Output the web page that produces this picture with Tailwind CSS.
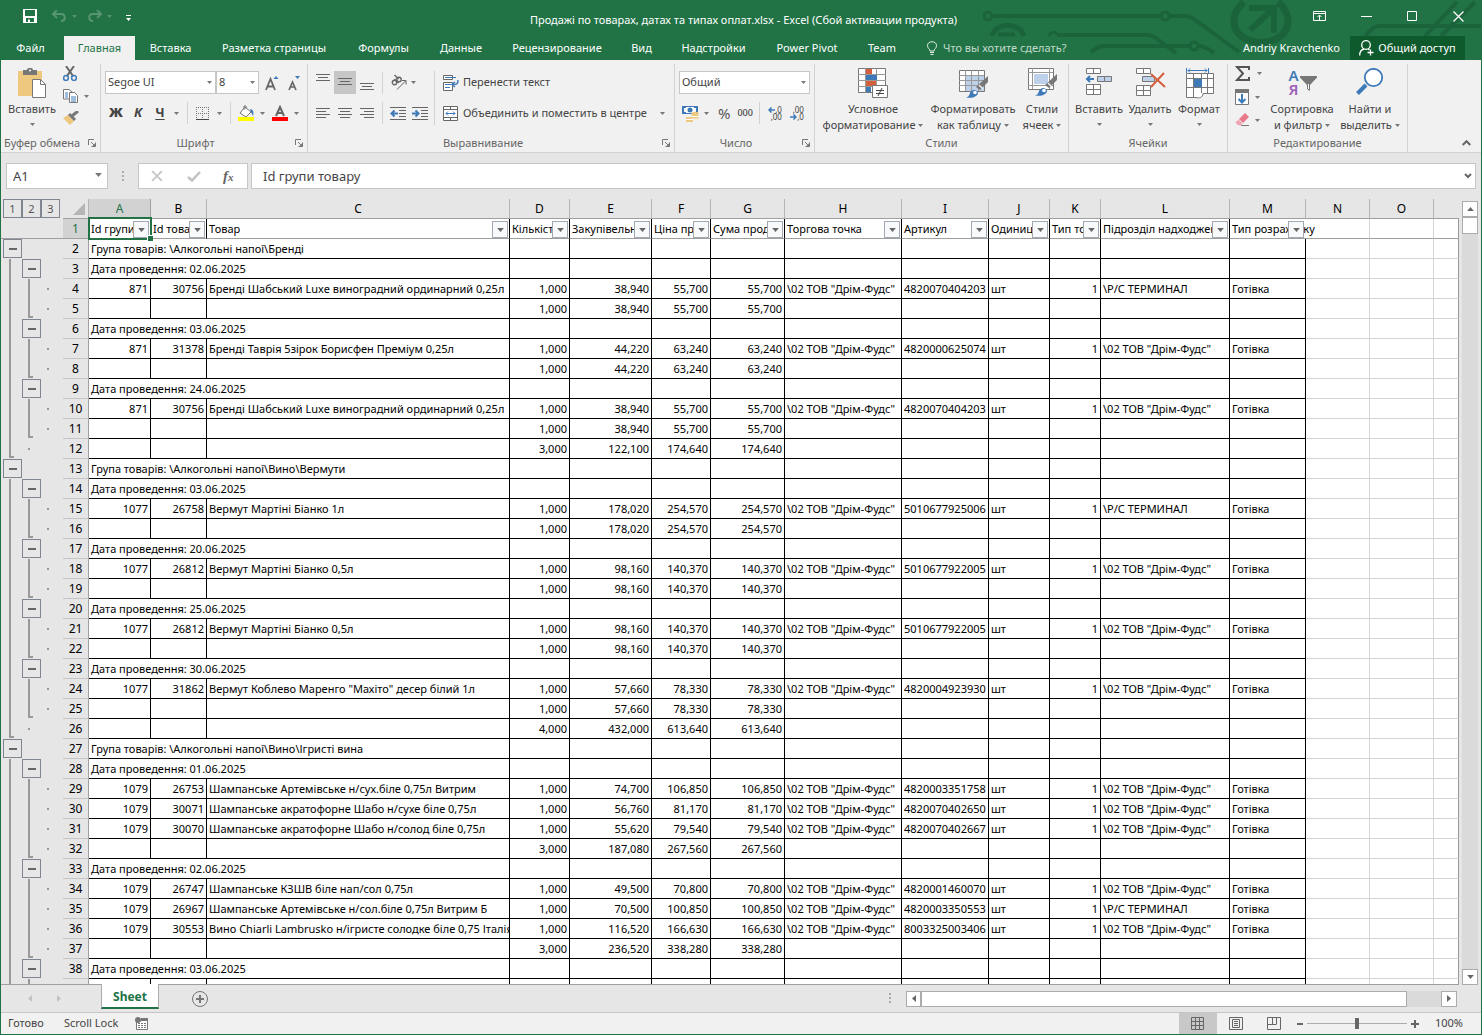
<!DOCTYPE html>
<html lang="ru">
<head>
  <meta charset="UTF-8">
  <meta name="viewport" content="width=device-width, initial-scale=1">
  <title>Продажі по товарах, датах та типах оплат.xlsx - Excel</title>
  <script src="https://cdn.jsdelivr.net/npm/@tailwindcss/browser@4"></script>
</head>
<body class="h-screen flex flex-col overflow-hidden border-x border-b border-[#217346] bg-[#e6e6e6] font-['Noto_Sans','Open_Sans',sans-serif] text-[11px] text-[#444444]">

  <svg class="hidden">
    <symbol id="arrow" viewBox="0 0 5 3"><path d="M0 0h5L2.5 3z" fill="currentColor"/></symbol>
    <symbol id="launcher" viewBox="0 0 8 8"><path d="M.5 6V.5H6M3 3l3.500 3.500M7.500 3.500v4h-4" fill="none" stroke="#777"/><path d="M7.500 4v3.500H4z" fill="#777"/></symbol>
    <symbol id="brush" viewBox="0 0 24 22"><path d="M23 0v6l-8 8-4-3z" fill="#777"/><path d="M14 9l4 4" stroke="#f1f1f1" stroke-width="1.500"/><path d="M1 21.500c4-1 3-4 5-6 2-2.500 6-2 7 1 0 4-5 6-12 5z" fill="#3f7ab8"/><circle cx="10" cy="16.500" r="1.800" fill="#fff"/></symbol>
  </svg>

  <!-- Title bar and tabs -->
  <header class="relative shrink-0 bg-[#217346] text-white">
    <svg class="absolute right-0 top-0" width="522" height="60" viewBox="0 0 522 60" fill="none" stroke="#1b633b" stroke-width="4">
      <circle cx="29" cy="16" r="4" stroke-width="3"/>
      <path d="M33 16h169M210 16h16c6 0 9 3 13 6l41 30"/>
      <circle cx="206" cy="16" r="4" stroke-width="3"/>
      <path d="M33 36c3-14 28-14 32 0" stroke-width="5"/>
      <path d="M39 34.500h17" stroke-width="4"/>
      <path d="M91 36c-1-5 7-5 7-1" stroke-width="3"/>
      <path d="M98 35h90c5 0 7 2 10 4l19 14"/>
      <path d="M132 52c7-5 9-6 14-6h86M240 46c6 0 9 3 15 7"/>
      <circle cx="235" cy="46" r="4" stroke-width="3"/>
      <path d="M285 2c-14 12-14 30 4 38 8 3 18 3 26 0 18-8 18-26 4-38" stroke-width="7"/>
      <path d="M290 8h25v25M313 10l-22 20" stroke-width="6"/>
      <path d="M406 36l8-8c2-1 3-2 6-2h102M466 36l32-34M482 36l34-34"/>
    </svg>
    <div class="relative flex h-9 items-center">
      <div class="flex flex-1 items-center pl-[22px] pb-1">
        <button aria-label="Сохранить" class="w-[29px]"><svg width="14" height="14" viewBox="0 0 14 14"><path d="M0 0h14v14H0z" fill="#fff"/><path d="M2 1h10v6H2zM3 9h8v4H3z" fill="#217346"/><path d="M5 10.500h2V13H5z" fill="#fff"/></svg></button>
        <button aria-label="Отменить" class="w-[20px] text-[#579472]"><svg width="15" height="12" viewBox="0 0 15 12" fill="none" stroke="currentColor" stroke-width="2"><path d="M5 0L1 4l4 4M1 4h8c5 0 5 7 0 7"/></svg></button>
        <svg class="mr-[10px] text-[#579472]" width="5" height="3"><use href="#arrow"/></svg>
        <button aria-label="Повторить" class="w-[20px] text-[#579472]"><svg width="15" height="12" viewBox="0 0 15 12" fill="none" stroke="currentColor" stroke-width="2"><path d="M10 0l4 4-4 4M14 4H6c-5 0-5 7 0 7"/></svg></button>
        <svg class="mr-3.5 text-[#579472]" width="5" height="3"><use href="#arrow"/></svg>
        <button aria-label="Настройка панели"><svg class="mt-1" width="5" height="6" viewBox="0 0 5 6"><path d="M0 0h5v1H0zM0 3h5L2.500 6z" fill="#fff"/></svg></button>
      </div>
      <h1 class="pt-1">Продажі по товарах, датах та типах оплат.xlsx - Excel (Сбой активации продукта)</h1>
      <div class="flex flex-1 items-center justify-end gap-[35px] pb-1 pr-[17px]">
        <button aria-label="Параметры ленты"><svg width="13" height="10" viewBox="0 0 13 10" fill="none" stroke="#fff"><path d="M.5.500h12v9H.500zM.5 2.500h12M6.500 9V4.500M4.500 6l2-2 2 2"/></svg></button>
        <button aria-label="Свернуть"><svg width="11" height="10" viewBox="0 0 11 10" stroke="#fff"><path d="M0 5.500h11"/></svg></button>
        <button aria-label="Развернуть"><svg width="11" height="10" viewBox="0 0 11 10" fill="none" stroke="#fff"><path d="M.5.500h9v9H.500z"/></svg></button>
        <button aria-label="Закрыть"><svg width="11" height="11" viewBox="0 0 11 11" stroke="#fff" stroke-width="1.300"><path d="M.5.500l10 10M10.500.500l-10 10"/></svg></button>
      </div>
    </div>
    <nav class="relative flex h-6 items-center whitespace-nowrap">
      <button class="h-6 w-[63px] pr-1">Файл</button>
      <button class="h-6 w-[71px] bg-[#f1f1f1] text-[#217346]">Главная</button>
      <button class="h-6 w-[71px]">Вставка</button>
      <button class="h-6 w-[136px]">Разметка страницы</button>
      <button class="h-6 w-[83px]">Формулы</button>
      <button class="h-6 w-[72px]">Данные</button>
      <button class="h-6 w-[120px]">Рецензирование</button>
      <button class="h-6 w-[49px]">Вид</button>
      <button class="h-6 w-[95px]">Надстройки</button>
      <button class="h-6 w-[92px]">Power Pivot</button>
      <button class="h-6 w-[58px]">Team</button>
      <button class="flex h-6 items-center gap-1.5 pl-4 text-[#c3dacd]">
        <svg width="10" height="14" viewBox="0 0 10 14" fill="none" stroke="#e4efe8"><path d="M3 10C3 8 .5 7.500.5 4.500c0-5 9-5 9 0C9.500 7.500 7 8 7 10zM3 11.500h4M3.500 13.500h3"/></svg>
        Что вы хотите сделать?
      </button>
      <span class="ml-auto mr-2.5">Andriy Kravchenko</span>
      <button class="mr-4 flex h-6 w-[115px] items-center justify-center gap-1 bg-[#0f5a2d]">
        <svg width="15" height="16" viewBox="0 0 15 16" fill="none" stroke="#fff" stroke-width="1.300"><circle cx="7" cy="5" r="4.300"/><path d="M.7 15.500c0-4 2-6 4.500-6.500M9 9l1.500 1M11.500 9.500v6M8.500 12.500h6"/></svg>
        Общий доступ
      </button>
    </nav>
  </header>

  <!-- Ribbon -->
  <section class="flex h-[93px] shrink-0 border-b border-[#d2d2d2] bg-[#f1f1f1] pt-1 whitespace-nowrap">
    <div class="flex w-[100px] flex-col border-r border-[#d2d2d2]">
      <div class="flex flex-1 pl-1">
        <button class="flex w-[54px] flex-col items-center pt-1">
          <svg class="shrink-0" width="28" height="30" viewBox="0 0 28 30"><path d="M0 3h24v25H0z" fill="#edc87e"/><path d="M5 2h4c0-3 6-3 6 0h4v5H5z" fill="#777"/><circle cx="12" cy="2.500" r="1" fill="#fff"/><path d="M14.500 11.500h8l5 5v13h-13z" fill="#fff" stroke="#777"/><path d="M22.500 11.500v5h5" fill="none" stroke="#777"/></svg>
          <span class="mt-[3px] leading-4">Вставить</span>
          <svg class="mt-1.5 text-[#777777]" width="5" height="3"><use href="#arrow"/></svg>
        </button>
        <div class="flex flex-col items-start gap-2 pl-1 pt-0.5">
          <button aria-label="Вырезать"><svg width="14" height="15" viewBox="0 0 14 15" fill="none" stroke-width="1.500"><path d="M3 0l7 10M11 0L4 10" stroke="#666" stroke-width="2"/><circle cx="3" cy="12" r="2.400" stroke="#3f7ab8"/><circle cx="11" cy="12" r="2.400" stroke="#3f7ab8"/></svg></button>
          <button aria-label="Копировать" class="flex items-center gap-[5px]"><svg width="16" height="14" viewBox="0 0 16 14" stroke="#777" fill="#fff"><path d="M.5.500H6L9 3v7H.500z"/><path d="M6.500 3.500h5l3 3v7h-8z"/><path d="M2 4h3M2 6h3M2 8h3M8 8h5M8 10h5M8 12h5" stroke="#3f7ab8"/></svg><svg class="text-[#777777]" width="5" height="3"><use href="#arrow"/></svg></button>
          <button aria-label="Формат по образцу"><svg width="16" height="14" viewBox="0 0 16 14"><path d="M0 7l5-3 6 6-4 4z" fill="#edc87e"/><path d="M5 4l2-2 6 6-2 2z" fill="#777"/><path d="M9 5l6-5" stroke="#777" stroke-width="3"/></svg></button>
        </div>
      </div>
      <div class="flex h-[18px] items-center justify-between pl-[3px] pr-1 text-[#666666]"><span>Буфер обмена</span><button aria-label="Параметры буфера"><svg width="8" height="8"><use href="#launcher"/></svg></button></div>
    </div>

    <div class="flex w-[207px] flex-col border-r border-[#d2d2d2]">
      <div class="flex flex-1 flex-col gap-2 pl-1 pt-[7px]">
        <div class="flex h-[23px] items-center">
          <div class="relative">
            <select aria-label="Шрифт" class="block h-[23px] w-[111px] appearance-none border border-[#c6c6c6] bg-white px-0.5"><option>Segoe UI</option></select>
            <svg class="pointer-events-none absolute right-1 top-2.5 text-[#777777]" width="5" height="3"><use href="#arrow"/></svg>
          </div>
          <div class="relative">
            <select aria-label="Размер шрифта" class="block h-[23px] w-[43px] appearance-none border border-[#c6c6c6] bg-white px-0.5"><option>8</option></select>
            <svg class="pointer-events-none absolute right-1 top-2.5 text-[#777777]" width="5" height="3"><use href="#arrow"/></svg>
          </div>
          <button aria-label="Увеличить размер" class="ml-1.5"><svg width="14" height="16" viewBox="0 0 14 16" fill="none"><path d="M1 15L5.500 4 10 15M3 11.500h5" stroke="#666" stroke-width="1.800"/><path d="M8.500 4h5L11 1z" fill="#3f7ab8"/></svg></button>
          <button aria-label="Уменьшить размер" class="ml-[9px]"><svg width="12" height="16" viewBox="0 0 12 16" fill="none"><path d="M1 15l3.500-8L8 15M2.500 12h4" stroke="#666" stroke-width="1.700"/><path d="M7 1h5L9.500 4z" fill="#3f7ab8"/></svg></button>
        </div>
        <div class="flex h-[22px] items-center">
          <button class="w-[22px] text-[13px] font-black">Ж</button>
          <button class="w-[22px] text-[13px] font-bold italic">К</button>
          <button class="w-[22px] text-[13px] font-bold underline underline-offset-2">Ч</button>
          <svg class="ml-[3px] text-[#777777]" width="5" height="3"><use href="#arrow"/></svg>
          <span class="ml-2 h-[22px] w-px bg-[#d2d2d2]"></span>
          <button aria-label="Границы" class="ml-2"><svg width="13" height="13" viewBox="0 0 13 13" fill="none" stroke="#777"><path d="M0 .5h13M0 6.500h13M.5 0v12M6.500 0v12M12.500 0v12" stroke-dasharray="1 1"/><path d="M0 12.500h13" stroke="#444"/></svg></button>
          <svg class="ml-2 text-[#777777]" width="5" height="3"><use href="#arrow"/></svg>
          <span class="ml-2 h-[22px] w-px bg-[#d2d2d2]"></span>
          <button aria-label="Цвет заливки" class="ml-[7px]"><svg width="16" height="16" viewBox="0 0 16 16"><path d="M7 2l6 5-5 5-6-4z" fill="#fff" stroke="#777"/><path d="M6 5V1h2v3" fill="none" stroke="#777"/><path d="M12 4c3 0 4 3 3 7l-2-4z" fill="#3f7ab8"/><path d="M0 12h16v4H0z" fill="#ff0"/></svg></button>
          <svg class="ml-1.5 text-[#777777]" width="5" height="3"><use href="#arrow"/></svg>
          <button aria-label="Цвет текста" class="ml-[7px]"><svg width="16" height="16" viewBox="0 0 16 16"><path d="M4 11L8 2l4 9M5.500 8h5" fill="none" stroke="#666" stroke-width="2"/><path d="M0 12h16v4H0z" fill="#f00"/></svg></button>
          <svg class="ml-1.5 text-[#777777]" width="5" height="3"><use href="#arrow"/></svg>
        </div>
      </div>
      <div class="flex h-[18px] items-center pr-1 text-[#666666]"><span class="w-[189px] text-center">Шрифт</span><button aria-label="Параметры шрифта" class="ml-auto"><svg width="8" height="8"><use href="#launcher"/></svg></button></div>
    </div>

    <div class="flex w-[367px] flex-col border-r border-[#d2d2d2]">
      <div class="flex flex-1 pt-[7px]">
        <div class="flex flex-col gap-2 pl-1">
          <div class="flex h-[23px] items-center">
            <button aria-label="По верхнему краю" class="flex h-[23px] w-[22px] justify-center pt-[3px]"><svg width="14" height="14" viewBox="0 0 14 14" stroke="#666"><path d="M0 .5h14M2 3.500h10M0 6.500h14"/></svg></button>
            <button aria-label="По середине" class="flex h-[23px] w-[22px] justify-center bg-[#c6c6c6] pt-[7px]"><svg width="14" height="14" viewBox="0 0 14 14" stroke="#666"><path d="M0 .5h14M2 3.500h10M0 6.500h14"/></svg></button>
            <button aria-label="По нижнему краю" class="flex h-[23px] w-[22px] justify-center pt-3"><svg class="shrink-0" width="14" height="8" viewBox="0 0 14 8" stroke="#666"><path d="M0 .5h14M2 3.500h10M0 6.500h14"/></svg></button>
            <span class="ml-1 h-[22px] w-px bg-[#d2d2d2]"></span>
            <button aria-label="Ориентация" class="ml-2"><svg class="overflow-visible" width="16" height="15" viewBox="0 0 16 15" fill="none" stroke="#666" stroke-width="1.400"><circle cx="3.500" cy="7.500" r="2.200"/><path d="M3.500 4l4 4"/><circle cx="8" cy="4.500" r="2.200"/><path d="M3.500 0l4 4"/><path d="M6 14.500l8.500-8.500M11 5.500h4v4" stroke-width="1"/></svg></button>
            <svg class="ml-1 text-[#777777]" width="5" height="3"><use href="#arrow"/></svg>
          </div>
          <div class="flex h-[22px] items-center">
            <button aria-label="По левому краю" class="flex w-[22px] justify-center"><svg width="14" height="10" viewBox="0 0 14 10" stroke="#666"><path d="M0 .5h14M0 3.500h10M0 6.500h14M0 9.500h10"/></svg></button>
            <button aria-label="По центру" class="flex w-[22px] justify-center"><svg width="14" height="10" viewBox="0 0 14 10" stroke="#666"><path d="M0 .5h14M2 3.500h10M0 6.500h14M2 9.500h10"/></svg></button>
            <button aria-label="По правому краю" class="flex w-[22px] justify-center"><svg width="14" height="10" viewBox="0 0 14 10" stroke="#666"><path d="M0 .5h14M4 3.500h10M0 6.500h14M4 9.500h10"/></svg></button>
            <span class="ml-1 h-[22px] w-px bg-[#d2d2d2]"></span>
            <button aria-label="Уменьшить отступ" class="ml-[7px]"><svg width="16" height="13" viewBox="0 0 16 13" stroke="#666" fill="none"><path d="M0 .5h16M9 3.500h7M9 6.500h7M9 9.500h7M0 12.500h16"/><path d="M8 6.500H2M4.500 3.500l-3 3 3 3" stroke="#3f7ab8" stroke-width="2"/></svg></button>
            <button aria-label="Увеличить отступ" class="ml-1.5"><svg width="16" height="13" viewBox="0 0 16 13" stroke="#666" fill="none"><path d="M0 .5h16M9 3.500h7M9 6.500h7M9 9.500h7M0 12.500h16"/><path d="M0 6.500h6M3.500 3.500l3 3-3 3" stroke="#3f7ab8" stroke-width="2"/></svg></button>
          </div>
        </div>
        <span class="ml-1.5 h-[54px] w-px bg-[#d2d2d2]"></span>
        <div class="flex flex-1 flex-col gap-2 pl-2 pr-[9px]">
          <button class="flex h-[23px] items-center gap-1"><svg width="16" height="16" viewBox="0 0 16 16" fill="none" stroke="#666"><path d="M.5.500h9v4h-9zM.5 7.500h9v8h-9z" fill="#fff"/><path d="M2 2.500h11M2 9.500h6M2 12.500h5" stroke="#3f7ab8"/><path d="M15 5c0 4-1 4.500-5 4.500M12 7l-3 2.500 3 2.500" stroke="#3f7ab8" stroke-width="1.500"/></svg>Перенести текст</button>
          <button class="flex h-[22px] items-center gap-1"><svg width="16" height="15" viewBox="0 0 16 15" fill="#fff" stroke="#666"><path d="M.5.500h14v14H.500zM.5 3.500h14M.5 11.500h14M7.500 0v3M7.500 12v3"/><path d="M3 7.500h9M5 5.500l-2 2 2 2M10 5.500l2 2-2 2" fill="none" stroke="#3f7ab8"/></svg>Объединить и поместить в центре<svg class="ml-auto text-[#777777]" width="5" height="3"><use href="#arrow"/></svg></button>
        </div>
      </div>
      <div class="flex h-[18px] items-center pr-1 text-[#666666]"><span class="w-[350px] text-center">Выравнивание</span><button aria-label="Параметры выравнивания" class="ml-auto"><svg width="8" height="8"><use href="#launcher"/></svg></button></div>
    </div>

    <div class="flex w-[140px] flex-col border-r border-[#d2d2d2]">
      <div class="flex flex-1 flex-col gap-2 px-1 pt-[7px]">
        <div class="relative">
          <select aria-label="Числовой формат" class="block h-[23px] w-full appearance-none border border-[#c6c6c6] bg-white px-0.5"><option>Общий</option></select>
          <svg class="pointer-events-none absolute right-1 top-2.5 text-[#777777]" width="5" height="3"><use href="#arrow"/></svg>
        </div>
        <div class="flex h-[22px] items-center pl-[3px]">
          <button aria-label="Финансовый формат"><svg width="17" height="17" viewBox="0 0 17 17"><path d="M0 1h16v8H0z" fill="#3f7ab8"/><path d="M2 2h12v6H2z" fill="#fff"/><path d="M1 1h3v2H1zM12 1h3v2h-3zM1 7h3v2H1z" fill="#3f7ab8"/><circle cx="8" cy="5" r="2.500" fill="#3f7ab8"/><ellipse cx="13" cy="8.500" rx="3.500" ry="1.800" fill="#edc87e"/><path d="M9.500 9.500h7v5h-7zM4 12h7v5H4z" fill="#edc87e"/><path d="M9.500 11.500h7M9.500 14h7M4 14.500h7" stroke="#fff"/></svg></button>
          <svg class="ml-[5px] text-[#777777]" width="5" height="3"><use href="#arrow"/></svg>
          <button class="ml-[9px] text-[15px] text-[#555555]">%</button>
          <button class="ml-[7px] text-[9px] font-medium">000</button>
          <span class="ml-1.5 h-[22px] w-px bg-[#d2d2d2]"></span>
          <button aria-label="Увеличить разрядность" class="ml-[7px] flex w-[15px] flex-col items-end text-[8px] leading-[7px]"><span class="flex items-center"><svg width="7" height="6" viewBox="0 0 7 6" fill="none" stroke="#3f7ab8" stroke-width="1.500"><path d="M7 3H1M3.500.500L1 3l2.500 2.500"/></svg>,0</span><span>,00</span></button>
          <button aria-label="Уменьшить разрядность" class="ml-[7px] flex w-[15px] flex-col items-end text-[8px] leading-[7px]"><span>,00</span><span class="flex items-center"><svg width="7" height="6" viewBox="0 0 7 6" fill="none" stroke="#3f7ab8" stroke-width="1.500"><path d="M0 3h6M3.500.500L6 3 3.500 5.500"/></svg>,0</span></button>
        </div>
      </div>
      <div class="flex h-[18px] items-center pr-1 text-[#666666]"><span class="w-[122px] text-center">Число</span><button aria-label="Параметры числа" class="ml-auto"><svg width="8" height="8"><use href="#launcher"/></svg></button></div>
    </div>

    <div class="flex w-[254px] flex-col border-r border-[#d2d2d2]">
      <div class="flex flex-1 pl-1">
        <button class="flex w-[108px] flex-col items-center pt-1 leading-4">
          <svg class="mb-0.5" width="31" height="31" viewBox="0 0 31 31"><path d="M.5.500h27v24H.500z" fill="#fff" stroke="#777"/><path d="M0 6.500h28M0 12.500h28M0 18.500h28M7.500 0v25M18.500 0v25" stroke="#999"/><path d="M8 1h6v5H8zM8 13h10v5H8z" fill="#d65f3e"/><path d="M8 7h11v5H8zM8 19h5v5H8z" fill="#3f7ab8"/><path d="M14.500 17.500h15v12h-15z" fill="#fff" stroke="#777"/><path d="M18 22.500h8M18 25.500h8M24 20l-4 8" stroke="#444"/></svg>
          <span>Условное</span>
          <span class="flex items-center gap-[3px]">форматирование<svg class="text-[#777777]" width="5" height="3"><use href="#arrow"/></svg></span>
        </button>
        <button class="flex w-[92px] flex-col items-center pt-1 leading-4">
          <svg class="mb-0.5" width="31" height="31" viewBox="0 0 31 31"><path d="M1.500 2.500h25v21h-25z" fill="#fff" stroke="#777"/><path d="M8 8h18v15H8z" fill="#bdd2ea"/><path d="M1 7.500h25M1 12.500h25M1 17.500h25M7.500 2v21M13.500 2v21M20.500 2v21" stroke="#999"/><use href="#brush" x="7" y="8" width="24" height="22"/></svg>
          <span>Форматировать</span>
          <span class="flex items-center gap-[3px]">как таблицу<svg class="text-[#777777]" width="5" height="3"><use href="#arrow"/></svg></span>
        </button>
        <button class="flex w-[46px] flex-col items-center pt-1 leading-4">
          <svg class="mb-0.5" width="31" height="31" viewBox="0 0 31 31"><path d="M1.500.500h25v21h-25z" fill="#fff" stroke="#777"/><path d="M1 4.500h25M1 17.500h25M5.500 0v21M22.500 0v21" stroke="#999"/><path d="M7 6h14v10H7z" fill="#bdd2ea"/><use href="#brush" x="7" y="6" width="24" height="22"/></svg>
          <span>Стили</span>
          <span class="flex items-center gap-[3px]">ячеек<svg class="text-[#777777]" width="5" height="3"><use href="#arrow"/></svg></span>
        </button>
      </div>
      <div class="h-[18px] text-center leading-[18px] text-[#666666]">Стили</div>
    </div>

    <div class="flex w-[159px] flex-col border-r border-[#d2d2d2]">
      <div class="flex flex-1 pl-1">
        <button class="flex w-[52px] flex-col items-center pt-1 leading-4">
          <svg class="mb-0.5" width="28" height="31" viewBox="0 0 28 31" fill="#fff" stroke="#777"><path d="M1.500.500h14v5h-14zM8.500.500v5M1.500 16.500h14v10h-14zM1.500 21.500h14M8.500 16.500v10"/><path d="M12.500 8.500h14v5h-14zM19.500 8.500v5" fill="#bdd2ea"/><path d="M9 11H3M5 8l-3 3 3 3" fill="none" stroke="#3f7ab8" stroke-width="2"/></svg>
          <span>Вставить</span>
          <svg class="mt-1.5 text-[#777777]" width="5" height="3"><use href="#arrow"/></svg>
        </button>
        <button class="flex w-[50px] flex-col items-center pt-1 leading-4">
          <svg class="mb-0.5" width="31" height="31" viewBox="0 0 31 31" fill="#fff" stroke="#777"><path d="M1.500.500h14v5h-14zM8.500.500v5M1.500 17.500h14v10h-14zM1.500 22.500h14M8.500 17.500v10"/><path d="M7.500 8.500h12v5h-12z" fill="#bdd2ea"/><path d="M16 6l14 13M29 5L16 19" fill="none" stroke="#d65f3e" stroke-width="2"/></svg>
          <span>Удалить</span>
          <svg class="mt-1.5 text-[#777777]" width="5" height="3"><use href="#arrow"/></svg>
        </button>
        <button class="flex w-[48px] flex-col items-center pt-1 leading-4">
          <svg class="mb-0.5" width="29" height="31" viewBox="0 0 29 31" fill="#fff" stroke="#777"><path d="M1.500 5.500h27v20H18c0 4-4 5-7 4H1.500zM1 10.500h27M1 19.500h27M8.500 5v24M16.500 5v20M22.500 5v20"/><path d="M9 11h8v8H9z" fill="#3f7ab8" stroke="none"/><path d="M1.500 0v5M23.500 0v5M3 2.500h19M5 .5l-2 2 2 2M20 .5l2 2-2 2" fill="none" stroke="#3f7ab8"/></svg>
          <span>Формат</span>
          <svg class="mt-1.5 text-[#777777]" width="5" height="3"><use href="#arrow"/></svg>
        </button>
      </div>
      <div class="h-[18px] text-center leading-[18px] text-[#666666]">Ячейки</div>
    </div>

    <div class="flex w-[180px] flex-col border-r border-[#d2d2d2]">
      <div class="flex flex-1 pl-[7px]">
        <div class="flex w-[33px] flex-col items-start gap-2 pt-0.5">
          <button aria-label="Сумма" class="flex items-center gap-1.5"><svg width="16" height="15" viewBox="0 0 16 15" fill="none" stroke="#555" stroke-width="2"><path d="M14 4V1H2l6 6.500L2 14h12v-3"/></svg><svg class="text-[#777777]" width="5" height="3"><use href="#arrow"/></svg></button>
          <button aria-label="Заполнить" class="flex items-center gap-[5px]"><svg width="15" height="16" viewBox="0 0 15 16" fill="#fff"><path d="M.5.500h13v15H.500z" stroke="#777"/><path d="M0 0h14v4H0z" fill="#777"/><path d="M7 5v8M3.500 10L7 13.500l3.500-3.500" fill="none" stroke="#3f7ab8" stroke-width="2"/></svg><svg class="text-[#777777]" width="5" height="3"><use href="#arrow"/></svg></button>
          <button aria-label="Очистить" class="flex items-center gap-[5px]"><svg width="15" height="14" viewBox="0 0 15 14"><path d="M4 6l6-6 4 4-6 6z" fill="#e8798b"/><path d="M3.500 6.500l4 4-2 2-3-.5L.5 9.500z" fill="#f0a6b2"/><path d="M6 12.500h8" stroke="#777"/></svg><svg class="text-[#777777]" width="5" height="3"><use href="#arrow"/></svg></button>
        </div>
        <button class="flex w-[68px] flex-col items-center pt-1 leading-4">
          <span class="mb-0.5 flex h-[31px]">
            <span class="flex w-3 flex-col text-[15px] font-semibold leading-[14px]"><span class="text-[#3f7ab8]">A</span><span class="text-[#9b5fb8]">Я</span></span>
            <svg width="17" height="31" viewBox="0 0 17 31"><path d="M0 8h17v1.500L10 17v6l-3-2v-4L0 9.500z" fill="#777"/><path d="M8.500 16v5" stroke="#fff"/></svg>
          </span>
          <span>Сортировка</span>
          <span class="flex items-center gap-[3px]">и фильтр<svg class="text-[#777777]" width="5" height="3"><use href="#arrow"/></svg></span>
        </button>
        <button class="flex w-[68px] flex-col items-center pt-1 leading-4">
          <svg class="mb-0.5" width="28" height="31" viewBox="0 0 28 31" fill="#fff" stroke="#3f7ab8"><path d="M10 17L1.500 25.500" stroke-width="4"/><circle cx="17.500" cy="9.500" r="8.700" stroke-width="1.800"/></svg>
          <span>Найти и</span>
          <span class="flex items-center gap-[3px]">выделить<svg class="text-[#777777]" width="5" height="3"><use href="#arrow"/></svg></span>
        </button>
      </div>
      <div class="h-[18px] text-center leading-[18px] text-[#666666]">Редактирование</div>
    </div>
    <button aria-label="Свернуть ленту" class="ml-auto self-end pb-1.5 pr-2.5"><svg width="9" height="6" viewBox="0 0 9 6" fill="none" stroke="#666" stroke-width="2"><path d="M.7 5l3.800-3.800L8.300 5"/></svg></button>
  </section>

  <!-- Formula bar -->
  <section class="flex h-[46px] shrink-0 items-start px-[5px] pt-2.5">
    <div class="relative">
      <input aria-label="Имя" value="A1" class="block h-[26px] w-[102px] border border-[#c6c6c6] bg-white px-1.5 text-[13px]">
      <svg class="absolute right-1.5 top-2.5 text-[#777777]" width="7" height="4"><use href="#arrow"/></svg>
    </div>
    <svg class="ml-3.5 mt-2" width="2" height="11"><path d="M0 0h2v2H0zM0 4h2v2H0zM0 8h2v2H0z" fill="#aaa"/></svg>
    <div class="ml-3.5 flex h-[26px] w-[110px] items-center border border-[#c6c6c6] bg-white pl-3">
      <button aria-label="Отмена"><svg width="12" height="10" viewBox="0 0 12 10" stroke="#c2c2c2" stroke-width="1.700"><path d="M1 0l10 10M11 0L1 10"/></svg></button>
      <button aria-label="Ввод" class="ml-6"><svg width="14" height="11" viewBox="0 0 14 11" fill="none" stroke="#c2c2c2" stroke-width="2.500"><path d="M1 6l4 3.500L13 1"/></svg></button>
      <button class="ml-[22px] font-['Liberation_Serif',serif] text-[15px] font-bold italic leading-none text-[#666666]">f<span class="text-[11px]">x</span></button>
    </div>
    <div class="relative ml-[3px] flex-1">
      <input aria-label="Строка формул" value="Id групи товару" class="block h-[26px] w-full border border-[#c6c6c6] bg-white px-[11px] text-[13px]">
      <svg class="absolute right-1 top-2.5" width="8" height="6" viewBox="0 0 8 6" fill="none" stroke="#666" stroke-width="2"><path d="M1 1l3 3 3-3"/></svg>
    </div>
  </section>

  <!-- Worksheet -->
  <main class="flex min-h-0 flex-1">
    <div class="relative min-w-0 flex-1 overflow-hidden border-b border-[#9f9f9f]">
      <table class="w-full table-fixed border-separate border-spacing-0 whitespace-nowrap leading-[19px] text-black">
        <colgroup>
          <col class="w-[62px]"><col class="w-[26px]"><col class="w-[62px]"><col class="w-[56px]"><col class="w-[303px]">
          <col class="w-[60px]"><col class="w-[82px]"><col class="w-[59px]"><col class="w-[74px]"><col class="w-[117px]">
          <col class="w-[87px]"><col class="w-[61px]"><col class="w-[51px]"><col class="w-[129px]"><col class="w-[76px]">
          <col class="w-[64px]"><col class="w-[64px]"><col>
        </colgroup>
        <thead id="head"></thead>
        <tbody id="rows"></tbody>
      </table>
      <!-- active cell frame -->
      <div class="pointer-events-none absolute left-[87px] top-[18px] h-[23px] w-[64px] border-2 border-[#217346]"><span class="absolute -bottom-[3px] -right-[3px] size-[6px] border-l border-t border-white bg-[#217346]"></span></div>
    </div>
    <div class="flex w-[22px] flex-col items-center pt-0.5">
      <button aria-label="Вверх" class="flex h-4 w-4 shrink-0 items-center justify-center border border-[#ababab] bg-white"><svg class="rotate-180 text-[#666666]" width="7" height="4"><use href="#arrow"/></svg></button>
      <div class="w-4 flex-1 bg-[#dadada]"><div class="h-[17px] border border-[#ababab] bg-white"></div></div>
      <button aria-label="Вниз" class="flex h-4 w-4 shrink-0 items-center justify-center border border-[#ababab] bg-white"><svg class="text-[#666666]" width="7" height="4"><use href="#arrow"/></svg></button>
    </div>
  </main>

  <!-- Sheet tabs -->
  <section class="flex h-7 shrink-0 items-center border-b border-[#c6c6c6] pr-[24px]">
    <button aria-label="Предыдущий лист" class="ml-[27px]"><svg width="4" height="7"><path d="M4 0v7L0 3.500z" fill="#c2c2c2"/></svg></button>
    <button aria-label="Следующий лист" class="ml-[25px]"><svg width="4" height="7"><path d="M0 0v7l4-3.500z" fill="#c2c2c2"/></svg></button>
    <button class="relative -mt-px ml-10 h-[25px] w-[58px] self-start border-x border-b-2 border-x-[#ababab] border-b-[#217346] bg-white pt-0.5 text-[12px] font-bold text-[#217346]">Sheet</button>
    <button aria-label="Новый лист" class="ml-[33px]"><svg width="16" height="16" viewBox="0 0 16 16" fill="none" stroke="#777"><circle cx="8" cy="8" r="7.500"/><path d="M8 4v8M4 8h8" stroke-width="2"/></svg></button>
    <svg class="ml-auto" width="2" height="11"><path d="M0 0h2v2H0zM0 4h2v2H0zM0 8h2v2H0z" fill="#aaa"/></svg>
    <div class="ml-[15px] flex h-4 w-[551px]">
      <button aria-label="Влево" class="flex w-[15px] items-center justify-center border border-[#ababab] bg-white"><svg width="4" height="7"><path d="M4 0v7L0 3.500z" fill="#666"/></svg></button>
      <div class="flex-1 bg-[#dadada]"><div class="h-4 w-[486px] border border-[#ababab] bg-white"></div></div>
      <button aria-label="Вправо" class="flex w-4 items-center justify-center border border-[#ababab] bg-white"><svg width="4" height="7"><path d="M0 0v7l4-3.500z" fill="#666"/></svg></button>
    </div>
  </section>

  <!-- Status bar -->
  <footer class="flex h-[21px] shrink-0 items-center bg-[#f1f1f1] pl-[7px] pr-[18px]">
    <span>Готово</span>
    <span class="ml-5">Scroll Lock</span>
    <button aria-label="Запись макроса" class="ml-[17px]"><svg width="13" height="13" viewBox="0 0 13 13"><path d="M1.500 5v7.500h11v-11H6" fill="#fff" stroke="#777"/><path d="M6 1h7v3H6z" fill="#777"/><path d="M3 6.500h8M3 8.500h8M3 10.500h8" stroke="#777" stroke-dasharray="2 1"/><circle cx="3" cy="3" r="3" fill="#777"/></svg></button>
    <button aria-label="Обычный" class="ml-auto flex h-[21px] w-[38px] items-center justify-center bg-[#c8c8c8]"><svg width="13" height="13" viewBox="0 0 13 13" fill="none" stroke="#666"><path d="M.5.500h12v12H.500zM.5 4.500h12M.5 8.500h12M4.500 0v13M8.500 0v13"/></svg></button>
    <button aria-label="Разметка страницы" class="flex w-[38px] justify-center"><svg width="14" height="13" viewBox="0 0 14 13" fill="none" stroke="#666"><path d="M.5.500h13v12H.500zM3.500 2.500h7v8h-7zM5 4.500h4M5 6.500h4M5 8.500h4"/></svg></button>
    <button aria-label="Страничный режим" class="flex w-[38px] justify-center"><svg width="14" height="13" viewBox="0 0 14 13" fill="none" stroke="#666"><path d="M.5.500h13v12H.500zM5.500 0v7M9.500 0v7M.5 7.500h9"/></svg></button>
    <button aria-label="Уменьшить" class="ml-1"><svg width="6" height="2"><path d="M0 0h6v2H0z" fill="#666"/></svg></button>
    <input aria-label="Масштаб" type="range" value="50" class="mx-1 h-3 w-[100px] appearance-none bg-[linear-gradient(#ababab,#ababab)] bg-[length:100%_1px] bg-center bg-no-repeat [&::-webkit-slider-thumb]:h-[11px] [&::-webkit-slider-thumb]:w-1 [&::-webkit-slider-thumb]:appearance-none [&::-webkit-slider-thumb]:bg-[#666666]">
    <button aria-label="Увеличить"><svg width="8" height="8"><path d="M3 0h2v8H3zM0 3h8v2H0z" fill="#666"/></svg></button>
    <span class="ml-4">100%</span>
  </footer>

  <script>
    const POINT = '\\02 ТОВ "Дрім-Фудс"';
    const TERMINAL = '\\Р/С ТЕРМИНАЛ';
    const titles = ['Id групи', 'Id това', 'Товар', 'Кількіст', 'Закупівельн', 'Ціна пр', 'Сума прод', 'Торгова точка', 'Артикул', 'Одиниц', 'Тип то', 'Підрозділ надходжен', 'Тип розрахунку'];

    // g - group, d - date, r - product, s - date subtotal, t - group total
    const rows = [
      ['g', '\\Алкогольні напої\\Бренді'],
      ['d', '02.06.2025'],
      ['r', '871', '30756', 'Бренді Шабський Luxe виноградний ординарний 0,25л', '1,000', '38,940', '55,700', '55,700', '4820070404203', TERMINAL],
      ['s', '1,000', '38,940', '55,700', '55,700'],
      ['d', '03.06.2025'],
      ['r', '871', '31378', 'Бренді Таврія 5зірок Борисфен Преміум 0,25л', '1,000', '44,220', '63,240', '63,240', '4820000625074', POINT],
      ['s', '1,000', '44,220', '63,240', '63,240'],
      ['d', '24.06.2025'],
      ['r', '871', '30756', 'Бренді Шабський Luxe виноградний ординарний 0,25л', '1,000', '38,940', '55,700', '55,700', '4820070404203', POINT],
      ['s', '1,000', '38,940', '55,700', '55,700'],
      ['t', '3,000', '122,100', '174,640', '174,640'],
      ['g', '\\Алкогольні напої\\Вино\\Вермути'],
      ['d', '03.06.2025'],
      ['r', '1077', '26758', 'Вермут Мартіні Біанко 1л', '1,000', '178,020', '254,570', '254,570', '5010677925006', TERMINAL],
      ['s', '1,000', '178,020', '254,570', '254,570'],
      ['d', '20.06.2025'],
      ['r', '1077', '26812', 'Вермут Мартіні Біанко 0,5л', '1,000', '98,160', '140,370', '140,370', '5010677922005', POINT],
      ['s', '1,000', '98,160', '140,370', '140,370'],
      ['d', '25.06.2025'],
      ['r', '1077', '26812', 'Вермут Мартіні Біанко 0,5л', '1,000', '98,160', '140,370', '140,370', '5010677922005', POINT],
      ['s', '1,000', '98,160', '140,370', '140,370'],
      ['d', '30.06.2025'],
      ['r', '1077', '31862', 'Вермут Коблево Маренго "Махіто" десер білий 1л', '1,000', '57,660', '78,330', '78,330', '4820004923930', POINT],
      ['s', '1,000', '57,660', '78,330', '78,330'],
      ['t', '4,000', '432,000', '613,640', '613,640'],
      ['g', '\\Алкогольні напої\\Вино\\Ігристі вина'],
      ['d', '01.06.2025'],
      ['r', '1079', '26753', 'Шампанське Артемівське н/сух.біле 0,75л Витрим', '1,000', '74,700', '106,850', '106,850', '4820003351758', POINT],
      ['r', '1079', '30071', 'Шампанське акратофорне Шабо н/сухе біле 0,75л', '1,000', '56,760', '81,170', '81,170', '4820070402650', POINT],
      ['r', '1079', '30070', 'Шампанське акратофорне Шабо н/солод біле 0,75л', '1,000', '55,620', '79,540', '79,540', '4820070402667', POINT],
      ['s', '3,000', '187,080', '267,560', '267,560'],
      ['d', '02.06.2025'],
      ['r', '1079', '26747', 'Шампанське КЗШВ біле нап/сол 0,75л', '1,000', '49,500', '70,800', '70,800', '4820001460070', POINT],
      ['r', '1079', '26967', 'Шампанське Артемівське н/сол.біле 0,75л Витрим Б', '1,000', '70,500', '100,850', '100,850', '4820003350553', TERMINAL],
      ['r', '1079', '30553', 'Вино Chiarli Lambrusko н/ігристе солодке біле 0,75 Італія', '1,000', '116,520', '166,630', '166,630', '8003325003406', POINT],
      ['s', '3,000', '236,520', '338,280', '338,280'],
      ['d', '03.06.2025'],
      ['r'],
    ];

    const slot = {
      button: '<button aria-label="Свернуть группу" class="flex size-[19px] items-center justify-center border border-[#7f8690]"><span class="h-0.5 w-2 bg-[#666666]"></span></button>',
      line: '<span class="ml-1.5 h-5 w-0.5 bg-[#999999]"></span>',
      end: '<span class="ml-1.5 h-[19px] w-[5px] border-b-2 border-l-2 border-[#999999]"></span>',
      dot: '<span class="ml-1.5 mt-[9px] size-0.5 bg-[#999999]"></span>',
      none: '<span></span>',
    };
    const outline = {
      g: ['button', 'none', 'none'],
      d: ['line', 'button', 'none'],
      r: ['line', 'line', 'dot'],
      s: ['line', 'end', 'dot'],
      t: ['end', 'dot', 'none'],
    };

    const text = v => `<td class="h-5 overflow-hidden border-b border-r border-black bg-white px-0.5">${v || ''}</td>`;
    const num = v => `<td class="h-5 overflow-hidden border-b border-r border-black bg-white px-0.5 text-right">${v || ''}</td>`;
    const wide = v => `<td colspan="3" class="h-5 overflow-hidden border-b border-r border-black bg-white px-0.5">${v}</td>`;
    const tail = '<td class="h-5 border-b border-r border-[#d4d4d4] bg-white"></td><td class="h-5 border-b border-r border-[#d4d4d4] bg-white"></td><td class="h-5 border-b border-r border-b-[#d4d4d4] border-r-[#999999] bg-white"></td>';
    const empty = n => text('').repeat(n);

    function cells(row) {
      const [type, ...v] = row;
      if (type === 'g') return wide('Група товарів: ' + v[0]) + empty(10);
      if (type === 'd') return wide('Дата проведення: ' + v[0]) + empty(10);
      if (type === 'r' && v.length) return num(v[0]) + num(v[1]) + text(v[2]) + v.slice(3, 7).map(num).join('') + text(POINT) + text(v[7]) + text('шт') + num('1') + text(v[8]) + text('Готівка');
      return empty(3) + [0, 1, 2, 3].map(i => num(v[i])).join('') + empty(6);
    }

    document.getElementById('rows').innerHTML = rows.map((row, i) => `
      <tr>
        <td class="p-0 align-top"><div class="grid h-5 grid-cols-[19px_19px_19px] pl-0.5">${outline[row[0]].map(k => slot[k]).join('')}</div></td>
        <th class="h-5 border-b border-r border-b-[#c6c6c6] border-r-[#9f9f9f] p-0 text-[12px] font-normal">${i + 2}</th>
        ${cells(row)}${tail}
      </tr>`).join('');

    const letters = 'BCDEFGHIJKLMNO'.split('');
    const level = n => `<button class="size-[19px] border border-[#7f8690] leading-none text-[#555555]">${n}</button>`;
    const filter = '<button aria-label="Фильтр" class="absolute right-px top-0.5 flex h-[17px] w-4 items-center justify-center border border-[#a3a9b3] bg-[#f8f9fb] text-[#666666]"><svg width="7" height="4"><use href="#arrow"/></svg></button>';

    document.getElementById('head').innerHTML = `
      <tr>
        <td class="p-0 align-top"><div class="grid h-5 grid-cols-[19px_19px_19px] pl-0.5">${level(1)}${level(2)}${level(3)}</div></td>
        <th class="h-5 border-b border-r border-b-[#9f9f9f] border-r-[#b5b5b5] p-0"><svg class="ml-auto mr-[3px]" width="12" height="12"><path d="M12 0v12H0z" fill="#b5b5b5"/></svg></th>
        <th class="h-5 border-b border-r border-[#9f9f9f] bg-[#d2d2d2] p-0 text-[12px] font-normal text-[#217346]">A</th>
        ${letters.map(l => `<th class="h-5 border-b border-r border-b-[#9f9f9f] border-r-[#b5b5b5] p-0 text-[12px] font-normal">${l}</th>`).join('')}
        <th class="h-5 border-b border-[#9f9f9f] p-0"></th>
      </tr>
      <tr>
        <td class="h-5 border-b border-[#9f9f9f] p-0"></td>
        <th class="h-5 border-b border-r border-[#9f9f9f] bg-[#d2d2d2] p-0 text-[12px] font-normal text-[#217346]">1</th>
        ${titles.slice(0, 12).map(t => `<td class="relative h-5 border-b border-r border-b-[#9f9f9f] border-r-black bg-white p-0"><div class="mr-4 overflow-hidden pl-0.5">${t}</div>${filter}</td>`).join('')}
        <td colspan="2" class="h-5 border-b border-r border-b-[#9f9f9f] border-r-[#d4d4d4] bg-white p-0"><div class="relative w-[75px] px-0.5">${titles[12]}<span class="absolute right-0 top-0 h-[19px]">${filter}</span></div></td>
        <td class="h-5 border-b border-r border-b-[#9f9f9f] border-r-[#d4d4d4] bg-white"></td>
        <td class="h-5 border-b border-r border-b-[#9f9f9f] border-r-[#999999] bg-white"></td>
      </tr>`;
  </script>
</body>
</html>
